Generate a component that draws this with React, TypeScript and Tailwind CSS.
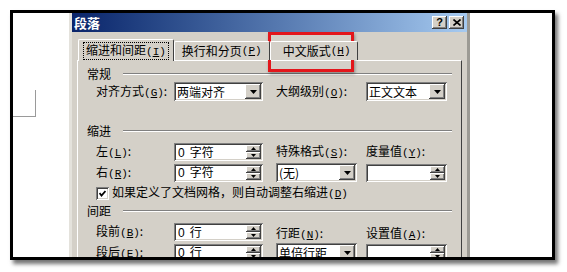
import React from 'react';

const raised =
  'bg-[#d4d0c8] shadow-[inset_-1px_-1px_#404040,inset_1px_1px_#ffffff,inset_-2px_-2px_#808080]';
const sunken =
  'bg-white shadow-[inset_1px_1px_#808080,inset_-1px_-1px_#ffffff,inset_2px_2px_#404040,inset_-2px_-2px_#d4d0c8]';

const Acc = ({ k }: { k: string }) => (
  <span className="font-['Liberation_Mono'] text-[11px]">
    (<u>{k}</u>)
  </span>
);

const Tri = ({ up, size = 7 }: { up?: boolean; size?: number }) => (
  <svg width={size} height={Math.ceil(size / 2)} viewBox={`0 0 ${size} ${Math.ceil(size / 2)}`}>
    {up ? (
      <polygon points={`0,${Math.ceil(size / 2)} ${size},${Math.ceil(size / 2)} ${size / 2},0`} fill="#000" />
    ) : (
      <polygon points={`0,0 ${size},0 ${size / 2},${Math.ceil(size / 2)}`} fill="#000" />
    )}
  </svg>
);

const Combo = ({ value, className }: { value: string; className: string }) => (
  <div className={`${sunken} ${className} h-[19px] flex items-center pl-[3px] pr-[2px]`}>
    <span className="flex-1 leading-[14px]">{value}</span>
    <div className={`${raised} w-[16px] h-[15px] flex items-center justify-center`}>
      <Tri />
    </div>
  </div>
);

const Spin = ({ num, unit, className }: { num?: string; unit?: string; className: string }) => (
  <div className={`${sunken} ${className} h-[18px] flex items-center pl-[4px] pr-[2px]`}>
    <span className="flex-1 leading-[14px] whitespace-nowrap">
      {num && <span className="font-['Liberation_Sans']">{num}</span>}
      {unit && <span className="ml-[5px]">{unit}</span>}
    </span>
    <div className="flex flex-col">
      <div className={`${raised} w-[15px] h-[7px] flex items-center justify-center`}>
        <Tri up size={5} />
      </div>
      <div className={`${raised} w-[15px] h-[7px] flex items-center justify-center`}>
        <Tri size={5} />
      </div>
    </div>
  </div>
);

const Group = ({ title, className }: { title: string; className: string }) => (
  <div className={`flex items-center h-[14px] ${className}`}>
    <span className="leading-[14px]">{title}</span>
    <div className="flex-1 ml-[12px] h-[2px] border-t border-t-[#808080] border-b border-b-white" />
  </div>
);

export default function App() {
  return (
    <div className="relative w-[567px] h-[272px] bg-white pt-[10px] pl-[10px] font-['Noto_Sans_CJK_SC',sans-serif] text-[12px] text-black">
      <div className="w-[545px] h-[250px] border-[3px] border-black overflow-hidden flex bg-white shadow-[3px_4px_4px_rgba(0,0,0,0.55)]">
        <div className="w-[56px] shrink-0">
          <div className="mt-[77px] w-[23px] h-[27px] border-r border-b border-[#9a9a9a]" />
        </div>

        <div className="w-[401px] shrink-0 h-[300px] bg-[#d4d0c8] border-l-[3px] border-l-[#e4e2dc] border-r-[3px] border-r-[#9c9a94] flex flex-col">
          <div className="h-[19px] bg-gradient-to-r from-[#0a246a] to-[#a6caf0] flex items-center pl-[2px] pr-[3px]">
            <span className="text-white font-bold text-[13px] leading-[15px] flex-1">段落</span>
            <div className={`${raised} w-[15px] h-[13px] flex items-center justify-center font-bold text-[11px] font-['Liberation_Sans'] leading-none`}>
              ?
            </div>
            <div className={`${raised} ml-[2px] w-[15px] h-[13px] flex items-center justify-center`}>
              <svg width="8" height="7" viewBox="0 0 8 7">
                <path d="M0.5 0.5 L7.5 6.5 M7.5 0.5 L0.5 6.5" stroke="#000" strokeWidth="1.6" />
              </svg>
            </div>
          </div>

          <div className="mt-[7px] mx-[5px] flex items-end pl-[1px] relative z-10">
            <div className="h-[22px] -mb-px bg-[#d4d0c8] border-t border-l border-white border-r border-r-[#404040] rounded-t-[2px] px-[4px] flex items-center">
              <span className="border border-dotted border-black px-[2px] leading-[14px] whitespace-nowrap">
                缩进和间距<Acc k="I" />
              </span>
            </div>
            <div className="h-[19px] bg-[#d4d0c8] border-t border-l border-white border-r border-r-[#404040] rounded-t-[2px] px-[7px] flex items-center whitespace-nowrap">
              换行和分页<Acc k="P" />
            </div>
            <div className="h-[19px] bg-[#d4d0c8] border-t border-l border-white border-r border-r-[#404040] rounded-t-[2px] pl-[12px] pr-[6px] flex items-center whitespace-nowrap">
              中文版式<Acc k="H" />
            </div>
          </div>

          <div className="mx-[5px] flex-1 border-t border-l border-white border-r border-r-[#404040] pl-[9px] pr-[9px] pt-[6px]">
            <Group title="常规" className="" />

            <div className="mt-[1px] pl-[9px] flex items-center h-[19px]">
              <span className="w-[78px] whitespace-nowrap">对齐方式<Acc k="G" />:</span>
              <Combo value="两端对齐" className="w-[89px]" />
              <span className="ml-[13px] w-[90px] whitespace-nowrap">大纲级别<Acc k="O" />:</span>
              <Combo value="正文文本" className="w-[81px]" />
            </div>

            <Group title="缩进" className="mt-[23px]" />

            <div className="mt-[5px] pl-[9px] flex items-center h-[18px]">
              <span className="w-[78px] whitespace-nowrap">左<Acc k="L" />:</span>
              <Spin num="0" unit="字符" className="w-[89px]" />
              <span className="ml-[13px] w-[90px] whitespace-nowrap">特殊格式<Acc k="S" />:</span>
              <span className="whitespace-nowrap">度量值<Acc k="Y" />:</span>
            </div>

            <div className="mt-[2px] pl-[9px] flex items-center h-[19px]">
              <span className="w-[78px] whitespace-nowrap">右<Acc k="R" />:</span>
              <Spin num="0" unit="字符" className="w-[89px]" />
              <Combo value="(无)" className="ml-[13px] w-[81px]" />
              <Spin className="ml-[9px] w-[81px]" />
            </div>

            <div className="mt-[4px] pl-[9px] flex items-center h-[14px]">
              <div className={`${sunken} w-[13px] h-[13px] flex items-center justify-center`}>
                <svg width="7" height="7" viewBox="0 0 7 7">
                  <path d="M0.5 3 L2.5 5.5 L6.5 1" stroke="#000" strokeWidth="1.8" fill="none" />
                </svg>
              </div>
              <span className="ml-[3px] whitespace-nowrap leading-[14px]">
                如果定义了文档网格，则自动调整右缩进<Acc k="D" />
              </span>
            </div>

            <Group title="间距" className="mt-[4px]" />

            <div className="mt-[5px] pl-[9px] flex items-center h-[18px]">
              <span className="w-[78px] whitespace-nowrap">段前<Acc k="B" />:</span>
              <Spin num="0" unit="行" className="w-[89px]" />
              <span className="ml-[13px] w-[90px] whitespace-nowrap mt-[3px]">行距<Acc k="N" />:</span>
              <span className="whitespace-nowrap mt-[3px]">设置值<Acc k="A" />:</span>
            </div>

            <div className="mt-[2px] pl-[9px] flex items-center h-[19px]">
              <span className="w-[78px] whitespace-nowrap">段后<Acc k="E" />:</span>
              <Spin num="0" unit="行" className="w-[89px]" />
              <Combo value="单倍行距" className="ml-[13px] w-[81px]" />
              <Spin className="ml-[9px] w-[81px]" />
            </div>
          </div>
        </div>
      </div>

      <div className="absolute left-[268px] top-[32px] w-[86px] h-[40px] border-[3px] border-[#e3161b] shadow-[1px_2px_3px_rgba(0,0,0,0.35)]" />
    </div>
  );
}
